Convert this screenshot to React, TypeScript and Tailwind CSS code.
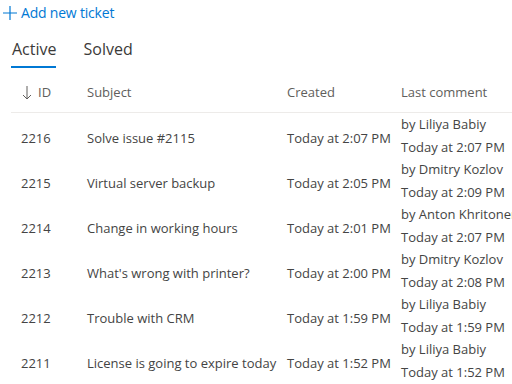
import React from "react";

const rows = [
  { id: "2216", subject: "Solve issue #2115", created: "Today at 2:07 PM", by: "by Liliya Babiy", at: "Today at 2:07 PM" },
  { id: "2215", subject: "Virtual server backup", created: "Today at 2:05 PM", by: "by Dmitry Kozlov", at: "Today at 2:09 PM" },
  { id: "2214", subject: "Change in working hours", created: "Today at 2:01 PM", by: "by Anton Khritonenko", at: "Today at 2:07 PM" },
  { id: "2213", subject: "What's wrong with printer?", created: "Today at 2:00 PM", by: "by Dmitry Kozlov", at: "Today at 2:08 PM" },
  { id: "2212", subject: "Trouble with CRM", created: "Today at 1:59 PM", by: "by Liliya Babiy", at: "Today at 1:59 PM" },
  { id: "2211", subject: "License is going to expire today", created: "Today at 1:52 PM", by: "by Liliya Babiy", at: "Today at 1:52 PM" },
];

export default function App() {
  return (
    <div
      className="w-[512px] h-[384px] overflow-hidden bg-white text-[#444444]"
      style={{ fontFamily: '"Open Sans", "Noto Sans", sans-serif' }}
    >
      <div className="flex items-center h-[25px] pl-[2px] text-[#0078d4] text-[14px]">
        <svg width="16" height="16" viewBox="0 0 16 16" className="mr-[3px]">
          <path d="M8 1v14M1 8h14" stroke="#0078d4" strokeWidth="1.2" fill="none" />
        </svg>
        <span className="tracking-[-0.2px]">Add new ticket</span>
      </div>
      <div className="flex pl-[11px] mt-[9px] gap-[27px] text-[16px] text-[#3b3a39]">
        <div className="flex flex-col">
          <span className="pl-[1px] leading-[30px]">Active</span>
          <div className="h-[2px] w-[45px] bg-[#0078d4] mt-[2px]" />
        </div>
        <div className="flex flex-col">
          <span className="leading-[30px]">Solved</span>
        </div>
      </div>
      <div className="ml-[11px] w-[600px] text-[13px]">
        <div className="grid grid-cols-[76px_200px_114px_1fr] h-[45px] pt-[6px] items-center border-b border-[#edebe9] text-[#605e5c]">
          <div className="pl-[11px] flex items-center gap-[6px]">
            <svg width="10" height="16" viewBox="0 0 10 16">
              <path d="M5 1v13M1 10l4 4 4-4" stroke="#605e5c" strokeWidth="1" fill="none" />
            </svg>
            <span>ID</span>
          </div>
          <div>Subject</div>
          <div>Created</div>
          <div>Last comment</div>
        </div>
        {rows.map((r) => (
          <div key={r.id} className="grid grid-cols-[76px_200px_114px_1fr] h-[45px] items-center">
            <div className="pl-[10px] pt-[5px]">{r.id}</div>
            <div className="whitespace-nowrap pt-[5px]">{r.subject}</div>
            <div className="whitespace-nowrap pt-[5px]">{r.created}</div>
            <div className="flex flex-col leading-[23px] whitespace-nowrap">
              <span>{r.by}</span>
              <span>{r.at}</span>
            </div>
          </div>
        ))}
      </div>
    </div>
  );
}
